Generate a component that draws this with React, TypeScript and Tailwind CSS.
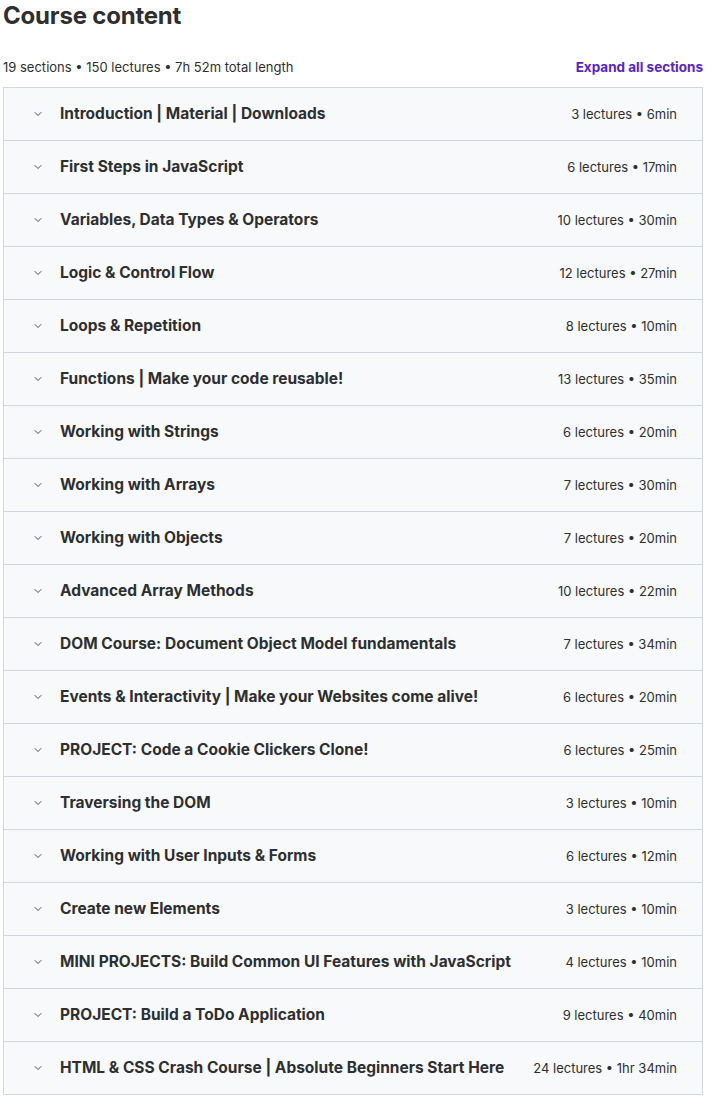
import { ChevronDown } from 'lucide-react';

const sections = [
  { title: 'Introduction | Material | Downloads', meta: '3 lectures • 6min' },
  { title: 'First Steps in JavaScript', meta: '6 lectures • 17min' },
  { title: 'Variables, Data Types & Operators', meta: '10 lectures • 30min' },
  { title: 'Logic & Control Flow', meta: '12 lectures • 27min' },
  { title: 'Loops & Repetition', meta: '8 lectures • 10min' },
  { title: 'Functions | Make your code reusable!', meta: '13 lectures • 35min' },
  { title: 'Working with Strings', meta: '6 lectures • 20min' },
  { title: 'Working with Arrays', meta: '7 lectures • 30min' },
  { title: 'Working with Objects', meta: '7 lectures • 20min' },
  { title: 'Advanced Array Methods', meta: '10 lectures • 22min' },
  { title: 'DOM Course: Document Object Model fundamentals', meta: '7 lectures • 34min' },
  { title: 'Events & Interactivity | Make your Websites come alive!', meta: '6 lectures • 20min' },
  { title: 'PROJECT: Code a Cookie Clickers Clone!', meta: '6 lectures • 25min' },
  { title: 'Traversing the DOM', meta: '3 lectures • 10min' },
  { title: 'Working with User Inputs & Forms', meta: '6 lectures • 12min' },
  { title: 'Create new Elements', meta: '3 lectures • 10min' },
  { title: 'MINI PROJECTS: Build Common UI Features with JavaScript', meta: '4 lectures • 10min' },
  { title: 'PROJECT: Build a ToDo Application', meta: '9 lectures • 40min' },
  { title: 'HTML & CSS Crash Course | Absolute Beginners Start Here', meta: '24 lectures • 1hr 34min' },
];

export default function App() {
  return (
    <div className="min-h-screen bg-white font-['Inter',sans-serif] text-[#2d2f31]">
      <h2 className="pl-[3px] pt-[1px] text-[24px] font-bold leading-[30px] tracking-[-0.2px]">
        Course content
      </h2>

      {/* Summary line */}
      <div className="mt-[27px] flex items-center justify-between pl-[3px] pr-[3px]">
        <span className="text-[13px] leading-[18px]">19 sections • 150 lectures • 7h 52m total length</span>
        <button className="text-[13.5px] font-bold leading-[18px] text-[#5624d0]">Expand all sections</button>
      </div>

      {/* Section list: every row carries its own top border */}
      <div className="mx-[3px] mt-[11px] border-x border-b border-[#d1d7dc]">
        {sections.map((s) => (
          <div
            key={s.title}
            className="flex h-[53px] items-center border-t border-[#d1d7dc] bg-[#f7f9fa] pl-[28px] pr-[25px]"
          >
            <ChevronDown size={12} strokeWidth={1.7} className="shrink-0" />
            <span className="ml-[16px] flex-1 text-[15.5px] font-bold leading-[20px]">{s.title}</span>
            <span className="text-[13px] leading-[18px]">{s.meta}</span>
          </div>
        ))}
      </div>
    </div>
  );
}
